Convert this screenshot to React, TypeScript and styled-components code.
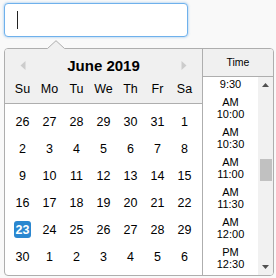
import { useEffect, useRef } from 'react';
import styled, { createGlobalStyle } from 'styled-components';

const GlobalStyle = createGlobalStyle`
  html, body {
    margin: 0;
    padding: 0;
    background: #f9f9f9;
  }
  body {
    font-family: 'Liberation Sans', Arial, sans-serif;
    color: #000;
  }
`;

const dayNames = ['Su', 'Mo', 'Tu', 'We', 'Th', 'Fr', 'Sa'];

const weeks = [
  [26, 27, 28, 29, 30, 31, 1],
  [2, 3, 4, 5, 6, 7, 8],
  [9, 10, 11, 12, 13, 14, 15],
  [16, 17, 18, 19, 20, 21, 22],
  [23, 24, 25, 26, 27, 28, 29],
  [30, 1, 2, 3, 4, 5, 6],
];

const times = Array.from({ length: 48 }, (_, i) => {
  const h = Math.floor(i / 2);
  const m = i % 2 ? '30' : '00';
  const h12 = h % 12 === 0 ? 12 : h % 12;
  return `${h12}:${m} ${h < 12 ? 'AM' : 'PM'}`;
});

export default function App() {
  const listRef = useRef<HTMLUListElement>(null);

  useEffect(() => {
    if (listRef.current) listRef.current.scrollTop = 572;
  }, []);

  return (
    <Page>
      <GlobalStyle />
      <FakeInput>
        <Caret />
      </FakeInput>
      <Popup>
        <Triangle width='18' height='9' viewBox='0 0 18 9'>
          <path d='M0 9 L9 0.5 L18 9 Z' fill='#f0f0f0' />
          <path d='M0.5 8.5 L9 0.7 L17.5 8.5' fill='none' stroke='#aeaeae' strokeWidth='1' />
        </Triangle>
        <MonthPane>
          <Header>
            <TitleRow>
              <NavArrow width='6' height='9' viewBox='0 0 6 9'>
                <path d='M5.5 0 L0.5 4.5 L5.5 9 Z' fill='#ccc' />
              </NavArrow>
              <Title>June 2019</Title>
              <NavArrow width='6' height='9' viewBox='0 0 6 9'>
                <path d='M0.5 0 L5.5 4.5 L0.5 9 Z' fill='#ccc' />
              </NavArrow>
            </TitleRow>
            <Grid>
              {dayNames.map(d => (
                <DayName key={d}>{d}</DayName>
              ))}
            </Grid>
          </Header>
          <Month>
            {weeks.map((week, wi) => (
              <Grid key={wi}>
                {week.map((d, di) => (
                  <Day key={di}>
                    <DayNum $selected={wi === 4 && di === 0}>{d}</DayNum>
                  </Day>
                ))}
              </Grid>
            ))}
          </Month>
        </MonthPane>
        <TimePane>
          <TimeHeader>Time</TimeHeader>
          <TimeBody>
            <TimeList ref={listRef}>
              {times.map(t => (
                <TimeItem key={t}>{t}</TimeItem>
              ))}
            </TimeList>
            <ScrollBar>
              <ScrollArrow width='7' height='4' viewBox='0 0 7 4'>
                <path d='M0 4 L3.5 0 L7 4 Z' fill='#505050' />
              </ScrollArrow>
              <Track>
                <Thumb />
              </Track>
              <ScrollArrow width='7' height='4' viewBox='0 0 7 4'>
                <path d='M0 0 L3.5 4 L7 0 Z' fill='#505050' />
              </ScrollArrow>
            </ScrollBar>
          </TimeBody>
        </TimePane>
      </Popup>
    </Page>
  );
}

const Page = styled.div`
  padding: 3px 0 0 4px;
`;

const FakeInput = styled.div`
  box-sizing: border-box;
  width: 184px;
  height: 34px;
  background: #fff;
  border: 1px solid #6fb1ec;
  border-radius: 4px;
  box-shadow: 0 0 2px 1px rgba(110, 175, 235, 0.35);
  display: flex;
  align-items: center;
  padding-left: 12px;
`;

const Caret = styled.span`
  display: block;
  width: 1px;
  height: 18px;
  background: #222;
`;

const Popup = styled.div`
  position: relative;
  box-sizing: border-box;
  margin-top: 11px;
  width: 270px;
  height: 228px;
  display: flex;
  background: #fff;
  border: 1px solid #aeaeae;
  border-radius: 4px;
`;

const Triangle = styled.svg`
  position: absolute;
  left: 42px;
  top: -9px;
  display: block;
`;

const MonthPane = styled.div`
  width: 197px;
  display: flex;
  flex-direction: column;
`;

const Header = styled.div`
  background: #f0f0f0;
  border-bottom: 1px solid #aeaeae;
  border-top-left-radius: 3px;
  padding-bottom: 5px;
  height: 49px;
`;

const TitleRow = styled.div`
  height: 32px;
  display: flex;
  align-items: center;
  justify-content: space-between;
  padding: 0 15px;
`;

const NavArrow = styled.svg`
  display: block;
`;

const Title = styled.div`
  font-size: 15px;
  font-weight: bold;
  color: #000;
`;

const Grid = styled.div`
  display: grid;
  grid-template-columns: repeat(7, 27px);
  justify-content: center;
`;

const DayName = styled.div`
  height: 17px;
  line-height: 17px;
  text-align: center;
  font-size: 12.5px;
  color: #000;
`;

const Month = styled.div`
  padding: 4px 0 5px;
`;

const Day = styled.div`
  height: 27px;
  display: flex;
  align-items: center;
  justify-content: center;
`;

const DayNum = styled.span<{ $selected?: boolean }>`
  display: flex;
  align-items: center;
  justify-content: center;
  min-width: 17px;
  height: 17px;
  border-radius: 3px;
  font-size: 12.5px;
  font-weight: ${p => (p.$selected ? 'bold' : 'normal')};
  color: ${p => (p.$selected ? '#fff' : '#000')};
  background: ${p => (p.$selected ? '#2a87d0' : 'transparent')};
`;

const TimePane = styled.div`
  flex: 1;
  border-left: 1px solid #aeaeae;
  display: flex;
  flex-direction: column;
  min-width: 0;
`;

const TimeHeader = styled.div`
  height: 27px;
  line-height: 27px;
  background: #f0f0f0;
  border-bottom: 1px solid #aeaeae;
  border-top-right-radius: 3px;
  text-align: center;
  font-size: 10.5px;
  color: #000;
`;

const TimeBody = styled.div`
  display: flex;
  height: 198px;
`;

const TimeList = styled.ul`
  flex: 1;
  list-style: none;
  margin: 0;
  padding: 0;
  overflow: hidden;
  background: #fff;
`;

const TimeItem = styled.li`
  height: 30px;
  padding: 0 10px;
  line-height: 18px;
  font-size: 11px;
  text-align: center;
  color: #000;
`;

const ScrollBar = styled.div`
  width: 15px;
  background: #f1f1f1;
  display: flex;
  flex-direction: column;
  align-items: center;
  padding: 6px 0;
  gap: 5px;
  border-bottom-right-radius: 3px;
`;

const ScrollArrow = styled.svg`
  display: block;
  flex: none;
`;

const Track = styled.div`
  flex: 1;
  width: 100%;
  padding-top: 67px;
  display: flex;
  justify-content: center;
  align-items: flex-start;
`;

const Thumb = styled.div`
  width: 12px;
  height: 22px;
  background: #c1c1c1;
`;
